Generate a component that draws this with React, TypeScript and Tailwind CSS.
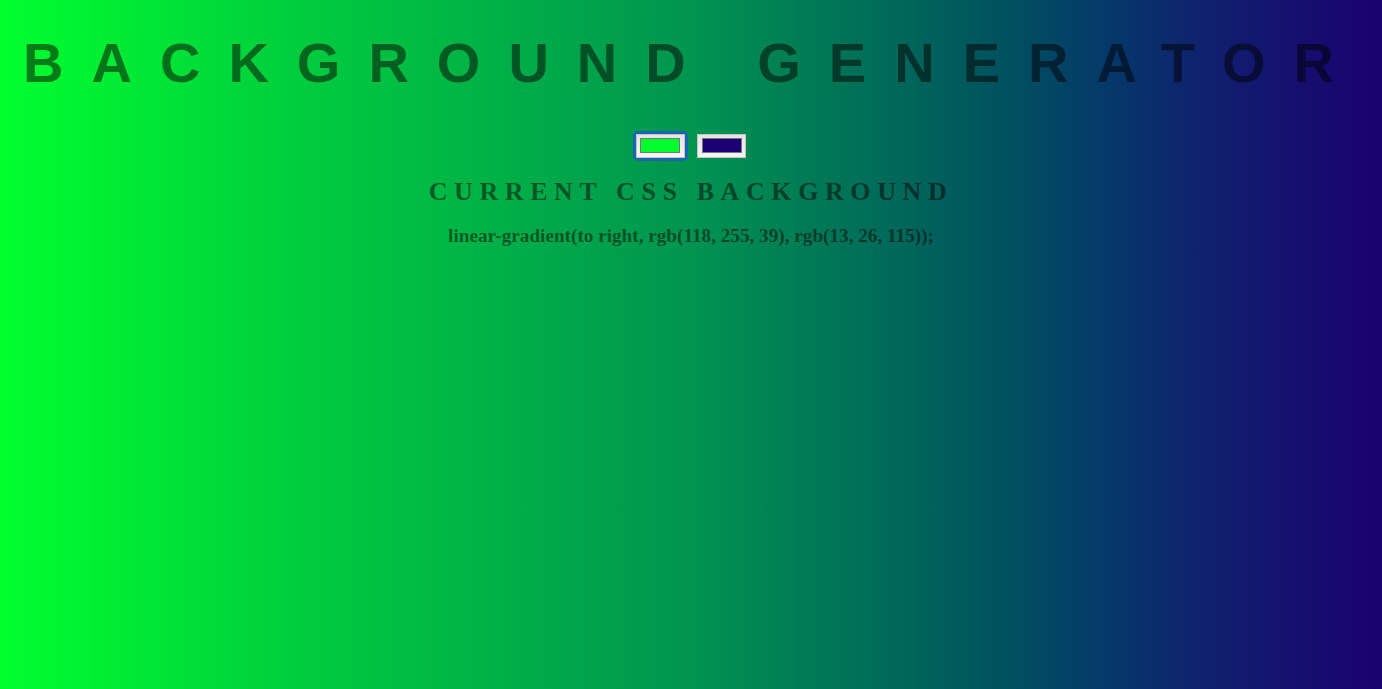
export default function App() {
  return (
    <div className="flex min-h-[689px] w-full flex-col items-center bg-[linear-gradient(to_right,#00ff2e_0%,#00cc3e_22%,#009450_50%,#007c55_58%,#00535e_72%,#05396a_80%,#0f216e_87%,#1b0070_100%)] text-black/50">
      <h1 className="mt-[31px] pl-[3px] text-center text-[56px] leading-[63px] font-bold tracking-[0.5em] [font-family:'Liberation_Sans',Arial,sans-serif]">
        BACKGROUND GENERATOR
      </h1>

      <div className="mt-[39.5px] flex gap-[12.5px]">
        <div className="-m-[3px] rounded-[5px] border-[3px] border-[#1a65b0]">
          <div className="flex h-[24px] w-[49px] items-center justify-center border border-[#c4c4c4] bg-gradient-to-b from-[#e4e4e4] to-[#f6f6f6]">
            <div className="h-[15px] w-[40px] border border-[#777] bg-[#00ff2e]" />
          </div>
        </div>
        <div className="flex h-[24px] w-[49px] items-center justify-center border border-[#c4c4c4] bg-gradient-to-b from-[#e4e4e4] to-[#f6f6f6]">
          <div className="h-[15px] w-[40px] border border-[#777] bg-[#1c0074]" />
        </div>
      </div>

      <h3 className="mt-[19px] text-center text-[26px] leading-[30px] font-bold tracking-[6.6px] [font-family:'Liberation_Serif','Times_New_Roman',serif]">
        CURRENT CSS BACKGROUND
      </h3>

      <h3 className="mt-[18px] text-center text-[19.2px] leading-[22px] font-bold [font-family:'Liberation_Serif','Times_New_Roman',serif]">
        linear-gradient(to right, rgb(118, 255, 39), rgb(13, 26, 115));
      </h3>
    </div>
  );
}
